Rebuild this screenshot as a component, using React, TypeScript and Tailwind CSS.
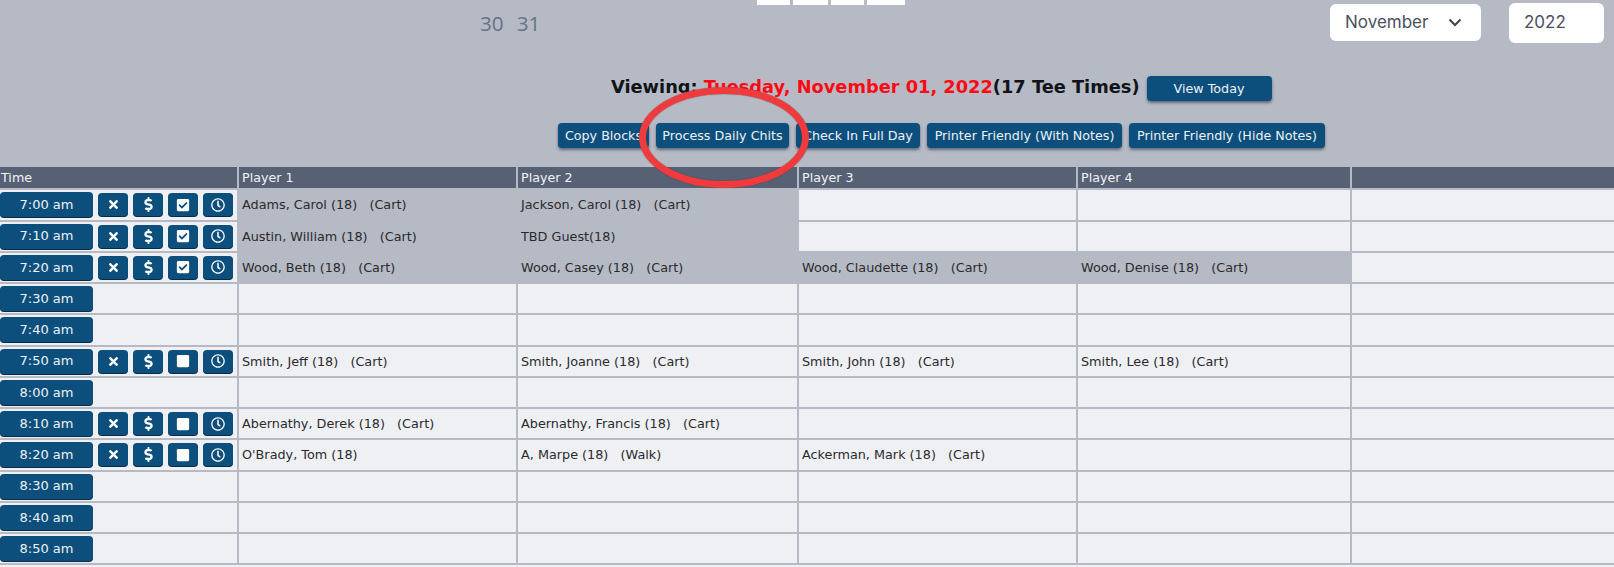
import { FaTimes, FaDollarSign, FaCheckSquare, FaSquare, FaRegClock } from "react-icons/fa";

type Row = { time: string; icons?: "checked" | "open"; players: string[]; booked: number };

const rows: Row[] = [
  { time: "7:00 am", icons: "checked", players: ["Adams, Carol (18)\u00a0\u00a0\u00a0(Cart)", "Jackson, Carol (18)\u00a0\u00a0\u00a0(Cart)", "", ""], booked: 2 },
  { time: "7:10 am", icons: "checked", players: ["Austin, William (18)\u00a0\u00a0\u00a0(Cart)", "TBD Guest(18)", "", ""], booked: 2 },
  { time: "7:20 am", icons: "checked", players: ["Wood, Beth (18)\u00a0\u00a0\u00a0(Cart)", "Wood, Casey (18)\u00a0\u00a0\u00a0(Cart)", "Wood, Claudette (18)\u00a0\u00a0\u00a0(Cart)", "Wood, Denise (18)\u00a0\u00a0\u00a0(Cart)"], booked: 4 },
  { time: "7:30 am", players: ["", "", "", ""], booked: 0 },
  { time: "7:40 am", players: ["", "", "", ""], booked: 0 },
  { time: "7:50 am", icons: "open", players: ["Smith, Jeff (18)\u00a0\u00a0\u00a0(Cart)", "Smith, Joanne (18)\u00a0\u00a0\u00a0(Cart)", "Smith, John (18)\u00a0\u00a0\u00a0(Cart)", "Smith, Lee (18)\u00a0\u00a0\u00a0(Cart)"], booked: 0 },
  { time: "8:00 am", players: ["", "", "", ""], booked: 0 },
  { time: "8:10 am", icons: "open", players: ["Abernathy, Derek (18)\u00a0\u00a0\u00a0(Cart)", "Abernathy, Francis (18)\u00a0\u00a0\u00a0(Cart)", "", ""], booked: 0 },
  { time: "8:20 am", icons: "open", players: ["O'Brady, Tom (18)", "A, Marpe (18)\u00a0\u00a0\u00a0(Walk)", "Ackerman, Mark (18)\u00a0\u00a0\u00a0(Cart)", ""], booked: 0 },
  { time: "8:30 am", players: ["", "", "", ""], booked: 0 },
  { time: "8:40 am", players: ["", "", "", ""], booked: 0 },
  { time: "8:50 am", players: ["", "", "", ""], booked: 0 },
];

function ActionButton({ children }: { children: React.ReactNode }) {
  return (
    <span className="flex h-[23px] w-[30px] items-center justify-center rounded-[4px] bg-[#0d4f7c] text-white shadow-[0_1px_0_#0a2b42]">
      {children}
    </span>
  );
}

function ToolButton({ label, className }: { label: string; className: string }) {
  return (
    <button className={`flex h-[25px] items-center justify-center overflow-hidden whitespace-nowrap rounded-[4px] bg-[#0d4f7c] text-[12.7px] text-[#eef2f6] shadow-[0_2px_3px_rgba(30,40,60,0.55)] ${className}`}>
      {label}
    </button>
  );
}

export default function App() {
  return (
    <div className="relative h-[567px] w-[1614px] overflow-hidden bg-[#b6bac4] font-['DejaVu_Sans','Liberation_Sans',sans-serif]">
      <div className="flex h-[76px] items-start">
        <div className="ml-[480px] mt-[9px] flex w-[277px] gap-[13px] font-['Open_Sans',sans-serif] text-[20.7px] leading-[28px] text-[#6b7186]">
          <span>30</span>
          <span>31</span>
        </div>
        <div className="flex gap-[3px]">
          <span className="h-[5px] w-[33px] bg-white" />
          <span className="h-[5px] w-[35px] bg-white" />
          <span className="h-[5px] w-[33px] bg-white" />
          <span className="h-[5px] w-[38px] bg-white" />
        </div>
        <div className="ml-[425px] mt-[4px] flex h-[37px] w-[151px] items-center rounded-[6px] bg-white pl-[15px] font-['Inter',sans-serif] text-[17px] text-[#4a5060]">
          <span>November</span>
          <svg className="ml-[20px]" width="14" height="9" viewBox="0 0 14 9" fill="none" stroke="#3d4350" strokeWidth="2">
            <path d="M1.5 1.5 7 7l5.5-5.5" />
          </svg>
        </div>
        <div className="ml-[28px] mt-[3px] flex h-[40px] w-[95px] items-center rounded-[6px] bg-white pl-[15px] font-['Inter',sans-serif] text-[17px] text-[#4a5060]">
          2022
        </div>
      </div>

      <div className="ml-[611px] flex h-[47px] items-start">
        <div className="whitespace-nowrap text-[17.8px] font-bold leading-[21px] text-[#111318]">
          Viewing: <span className="text-[#ff0a14]">Tuesday, November 01, 2022</span>(17 Tee Times)
        </div>
        <ToolButton label="View Today" className="ml-[7px] w-[125px]" />
      </div>

      <div className="ml-[558px] flex h-[44.3px] items-start gap-[7px]">
        <ToolButton label="Copy Blocks" className="w-[91px]" />
        <ToolButton label="Process Daily Chits" className="w-[133px]" />
        <ToolButton label="Check In Full Day" className="w-[124px]" />
        <ToolButton label="Printer Friendly (With Notes)" className="w-[195px]" />
        <ToolButton label="Printer Friendly (Hide Notes)" className="w-[196px]" />
      </div>

      <div className="grid grid-cols-[237px_277px_279px_277px_272px_1fr] grid-rows-[21px] auto-rows-[29.25px] gap-x-[2px] gap-y-[2px] text-[12.8px] text-[#2a2a2e]">
        {["Time", "Player 1", "Player 2", "Player 3", "Player 4", ""].map((h, i) => (
          <div key={i} className={`flex items-center bg-[#586174] text-[12.7px] text-[#f2f4f8] ${i === 0 ? "pl-[1px]" : "pl-[3px]"}`}>
            {h}
          </div>
        ))}
        {rows.map((r) => (
          <div key={r.time} className="contents">
            <div className="flex items-start bg-[#eff0f4] pt-[2px]">
              <span className="flex h-[25px] w-[93px] items-center justify-center rounded-[4px] bg-[#0d4f7c] text-[13px] text-[#eef2f6] shadow-[0_1px_0_#0a2b42]">
                {r.time}
              </span>
              {r.icons && (
                <span className="ml-[5px] mt-[1px] flex gap-[5px]">
                  <ActionButton><FaTimes size={13} /></ActionButton>
                  <ActionButton><FaDollarSign size={15} /></ActionButton>
                  <ActionButton>
                    {r.icons === "checked" ? <FaCheckSquare size={14} /> : <FaSquare size={14} />}
                  </ActionButton>
                  <ActionButton><FaRegClock size={14} /></ActionButton>
                </span>
              )}
            </div>
            {r.players.map((p, i) => (
              <div key={i} className={`flex items-center whitespace-nowrap pl-[3px] ${i < r.booked ? "bg-[#b6bac4]" : "bg-[#eff0f4]"}`}>
                {p}
              </div>
            ))}
            <div className="bg-[#eff0f4]" />
          </div>
        ))}
        <div className="col-span-6 bg-[#eff0f4]" />
      </div>

      <div className="absolute left-[639px] top-[87px] h-[101px] w-[170px] rounded-[50%] border-[7px] border-[#ef3b3d] shadow-[inset_0_0_1px_#333,0_0_1px_#333]" />
    </div>
  );
}
